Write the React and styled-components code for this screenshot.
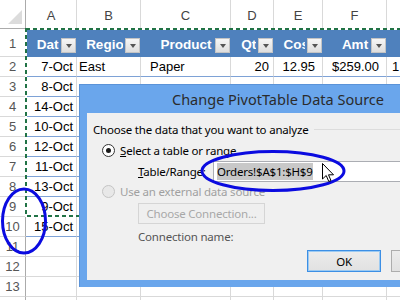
import styled, { createGlobalStyle } from 'styled-components';

const GlobalStyle = createGlobalStyle`
  html, body { margin: 0; padding: 0; background: #fff; }
  body { overflow: hidden; }
`;

const COLS = [26, 51, 64, 90, 43, 49, 64, 60];
const LETTERS = ['A', 'B', 'C', 'D', 'E', 'F', 'G'];
const HEADERS = ['Date', 'Region', 'Product', 'Qty', 'Cost', 'Amt', ''];

// per column alignment of body cells
const SPEC = [
  { align: 'right', pl: 2, pr: 3 },
  { align: 'left', pl: 2, pr: 2 },
  { align: 'left', pl: 9, pr: 2 },
  { align: 'right', pl: 2, pr: 4 },
  { align: 'right', pl: 2, pr: 7 },
  { align: 'money', pl: 9, pr: 9 },
  { align: 'left', pl: 5, pr: 2 },
];

// rows 3+ are hidden behind the dialog past column A
const ROWS = [
  ['7-Oct', 'East', 'Paper', '20', '12.95', '259.00', '1'],
  ['8-Oct'], ['14-Oct'], ['10-Oct'], ['12-Oct'], ['11-Oct'], ['13-Oct'], ['9-Oct'], ['15-Oct'],
];

const Page = styled.div`
  position: relative;
  width: 400px;
  height: 300px;
  overflow: hidden;
  font-family: "Liberation Sans", Arial, sans-serif;
`;

const Grid = styled.div`
  display: grid;
  grid-template-columns: ${COLS.map((w) => `${w}px`).join(' ')};
  grid-template-rows: 29px 28px repeat(13, 20px);
  width: max-content;
`;

const Corner = styled.div`
  border-right: 1px solid #ababab;
  border-bottom: 1px solid #ababab;
  display: flex;
  align-items: flex-end;
  justify-content: flex-end;
  padding: 0 3px 4px 0;
  &::after {
    content: '';
    border-style: solid;
    border-width: 0 0 14px 14px;
    border-color: transparent transparent #dcdcdc transparent;
  }
`;

const ColHead = styled.div`
  border-right: 1px solid #d9d9d9;
  border-bottom: 1px solid #ababab;
  display: flex;
  align-items: flex-end;
  justify-content: center;
  padding-bottom: 5px;
  color: #444;
  font-size: 13px;
`;

const RowNum = styled.div`
  border-right: 1px solid #ababab;
  border-bottom: 1px solid #d9d9d9;
  display: flex;
  align-items: flex-end;
  justify-content: center;
  padding-bottom: ${(p) => (p.$tall ? 5 : 2)}px;
  color: #555;
  font-size: 13px;
`;

const HeadCell = styled.div`
  background: #4f81bd;
  display: grid;
  align-items: end;
  padding-bottom: 4px;
  overflow: hidden;
`;

const HeadText = styled.span`
  grid-area: 1 / 1;
  text-align: center;
  color: #fff;
  font-weight: bold;
  font-size: 13.5px;
  padding-bottom: 1px;
  white-space: nowrap;
`;

const DropBtn = styled.span`
  grid-area: 1 / 1;
  justify-self: end;
  margin-right: 1px;
  width: 13px;
  height: 13px;
  border: 1px solid #c4c4c4;
  background: linear-gradient(#f6f6f6, #dedede);
  box-shadow: -1px 0 0 1px #4f81bd;
  display: flex;
  align-items: center;
  justify-content: center;
  &::after {
    content: '';
    border-style: solid;
    border-width: 4px 3.5px 0 3.5px;
    border-color: #555 transparent transparent transparent;
  }
`;

const Cell = styled.div`
  border-right: 1px solid #d9d9d9;
  border-bottom: 1px solid ${(p) => (p.$table ? '#7ea2d6' : '#d9d9d9')};
  display: flex;
  align-items: flex-end;
  justify-content: ${(p) =>
    p.$align === 'right' ? 'flex-end' : p.$align === 'money' ? 'space-between' : 'flex-start'};
  padding: 0 ${(p) => p.$pr}px 2px ${(p) => p.$pl}px;
  font-size: 13px;
  color: #000;
  white-space: nowrap;
  overflow: hidden;
`;

const Overlay = styled.svg`
  position: absolute;
  left: 0;
  top: 0;
  pointer-events: none;
`;

const Dialog = styled.div`
  position: absolute;
  left: 79px;
  top: 84px;
  width: 340px;
  height: 203px;
  box-sizing: border-box;
  background: #6aa6ec;
  border-left: 1px solid #5b93d8;
  border-top: 1px solid #5b93d8;
  padding: 0 0 7px 7px;
  display: flex;
  flex-direction: column;
`;

const TitleBar = styled.div`
  height: 28px;
  display: flex;
  align-items: center;
  padding-left: 85px;
  font-family: "Noto Sans", "Open Sans", sans-serif;
  font-size: 14.5px;
  color: #2b2b2b;
  white-space: nowrap;
`;

const Client = styled.div`
  flex: 1;
  background: #f0f0f0;
  display: flex;
  flex-direction: column;
  font-family: "Noto Sans", "Open Sans", sans-serif;
  font-size: 11.5px;
  letter-spacing: -0.2px;
  color: #000;
  white-space: nowrap;
`;

const Line = styled.div`
  display: flex;
  align-items: center;
  height: ${(p) => p.$h || 16}px;
  margin-top: ${(p) => p.$mt || 0}px;
  padding-left: ${(p) => p.$indent || 0}px;
  gap: ${(p) => p.$gap || 0}px;
  color: ${(p) => (p.$disabled ? '#a0a0a0' : p.$dim ? '#555' : '#000')};
`;

const GroupRule = styled.div`
  flex: 1;
  height: 1px;
  background: #dcdcdc;
  margin-left: 6px;
`;

const Radio = styled.span`
  width: 11px;
  height: 11px;
  border-radius: 50%;
  border: 1px solid ${(p) => (p.$disabled ? '#c4c4c4' : '#333')};
  background: ${(p) => (p.$disabled ? '#e8e8e8' : '#fff')};
  display: flex;
  align-items: center;
  justify-content: center;
  &::after {
    content: '';
    width: 5px;
    height: 5px;
    border-radius: 50%;
    background: ${(p) => (p.$checked ? '#1a1a1a' : 'transparent')};
  }
`;

const Key = styled.span`
  text-decoration: underline;
`;

const RangeLabel = styled.span`
  width: 75px;
`;

const RangeInput = styled.div`
  flex: 1;
  height: 21px;
  box-sizing: border-box;
  border: 1px solid #abadb3;
  border-right: none;
  background: #fff;
  display: flex;
  align-items: center;
  padding-left: 3px;
`;

const Selected = styled.span`
  background: #c8c8c8;
  color: #000;
  padding: 1px 0;
`;

const Button = styled.div`
  width: ${(p) => p.$w}px;
  height: ${(p) => p.$h || 22}px;
  box-sizing: border-box;
  flex-shrink: 0;
  display: flex;
  align-items: center;
  justify-content: center;
  border: 1px solid ${(p) => (p.$default ? '#3c8fe5' : p.$disabled ? '#d5d5d5' : '#adadad')};
  box-shadow: ${(p) => (p.$default ? 'inset 0 0 0 1px #9ccaf2' : 'none')};
  background: ${(p) => (p.$disabled ? '#efefef' : 'linear-gradient(#ececec, #e1e1e1)')};
  color: ${(p) => (p.$disabled ? '#a8a8a8' : '#000')};
`;

function HeaderRow() {
  return HEADERS.map((h, i) => (
    <HeadCell key={i}>
      <HeadText>{h}</HeadText>
      <DropBtn />
    </HeadCell>
  ));
}

function BodyRow({ values, table }) {
  return SPEC.map((s, i) => {
    const v = values[i] || '';
    return (
      <Cell key={i} $table={table} $align={s.align} $pl={s.pl} $pr={s.pr}>
        {s.align === 'money' && v ? (
          <>
            <span>$</span>
            <span>{v}</span>
          </>
        ) : (
          v
        )}
      </Cell>
    );
  });
}

export default function App() {
  const rows = [];
  for (let r = 2; r <= 14; r++) {
    const data = ROWS[r - 2];
    rows.push(
      <RowNum key={`n${r}`}>{r}</RowNum>,
      <BodyRow key={`r${r}`} values={data || []} table={!!data} />
    );
  }

  return (
    <Page>
      <GlobalStyle />
      <Grid>
        <Corner />
        {LETTERS.map((l) => (
          <ColHead key={l}>{l}</ColHead>
        ))}
        <RowNum $tall>1</RowNum>
        <HeaderRow />
        {rows}
      </Grid>

      <Overlay width="400" height="300">
        <rect x="26" y="29" width="420" height="187" fill="none" stroke="#fff" strokeWidth="2" />
        <rect x="26" y="29" width="420" height="187" fill="none" stroke="#217346" strokeWidth="2" strokeDasharray="4 3" />
      </Overlay>

      <Dialog>
        <TitleBar>Change PivotTable Data Source</TitleBar>
        <Client>
          <Line $mt={8} $indent={6}>
            Choose the data that you want to analyze
            <GroupRule />
          </Line>
          <Line $mt={5} $indent={15} $gap={5}>
            <Radio $checked />
            <span><Key>S</Key>elect a table or range</span>
          </Line>
          <Line $mt={2} $h={22} $indent={51}>
            <RangeLabel><Key>T</Key>able/Range:</RangeLabel>
            <RangeInput>
              <Selected>Orders!$A$1:$H$9</Selected>
            </RangeInput>
          </Line>
          <Line $mt={1} $indent={15} $gap={5} $disabled>
            <Radio $disabled />
            <span>Use an external data source</span>
          </Line>
          <Line $mt={4} $h={21} $indent={51}>
            <Button $w={127} $h={21} $disabled>Choose Connection...</Button>
          </Line>
          <Line $mt={4} $indent={51} $dim>
            Connection name:
          </Line>
          <Line $mt={6} $h={22} $indent={220} $gap={10}>
            <Button $w={74} $default>OK</Button>
            <Button $w={74}>Cancel</Button>
          </Line>
        </Client>
      </Dialog>

      <Overlay width="400" height="300">
        <ellipse cx="273" cy="171" rx="71" ry="19.5" fill="none" stroke="#0b0be0" strokeWidth="3" />
        <ellipse cx="24" cy="221" rx="21.5" ry="32" fill="none" stroke="#0b0be0" strokeWidth="3" />
        <path
          d="M322.5 163.5 V179 L326.2 175.5 L328.8 181.5 L331 180.6 L328.5 174.8 H333.5 Z"
          fill="#fff"
          stroke="#000"
          strokeWidth="1"
          strokeLinejoin="round"
        />
      </Overlay>
    </Page>
  );
}
